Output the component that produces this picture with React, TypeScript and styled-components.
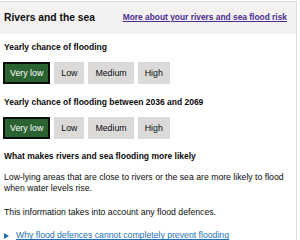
import React from "react";
import styled, { createGlobalStyle } from "styled-components";

const Global = createGlobalStyle`
  html, body { margin: 0; padding: 0; background: #ffffff; }
  body { font-family: "Liberation Sans", Arial, sans-serif; color: #0b0c0c; }
  * { box-sizing: border-box; }
`;

const Panel = styled.div`
  width: 297px;
  margin-top: 1px;
  border-top: 1px solid #dddddd;
  border-right: 1px solid #dddddd;
  height: 239px;
  overflow: hidden;
`;

const Header = styled.div`
  display: flex;
  align-items: center;
  justify-content: space-between;
  height: 32px;
  padding: 0 9px 1px 4px;
  background: #f3f2f1;
`;

const Title = styled.h2`
  margin: 0;
  font-size: 10.3px;
  font-weight: 700;
  line-height: 12px;
`;

const HeaderLink = styled.a`
  font-size: 8.4px;
  font-weight: 700;
  line-height: 11px;
  color: #4c2c92;
  text-decoration: underline;
  text-underline-offset: 1px;
`;

const Content = styled.div`
  padding: 8px 4px 0 4px;
`;

const SubHeading = styled.h3<{ $mb?: number }>`
  margin: 0 0 ${(p) => p.$mb ?? 9}px 0;
  font-size: 8.5px;
  font-weight: 700;
  line-height: 11px;
`;

const ButtonRow = styled.div<{ $mb: number }>`
  display: flex;
  gap: 4px;
  margin: 0 0 ${(p) => p.$mb}px -1px;
`;

const RiskButton = styled.div<{ $active?: boolean }>`
  display: flex;
  align-items: center;
  height: 22px;
  padding: 0 5px;
  font-size: 8.8px;
  line-height: 11px;
  background: ${(p) => (p.$active ? "#2a6331" : "#dbdad9")};
  color: ${(p) => (p.$active ? "#ffffff" : "#0b0c0c")};
  border: 2px solid ${(p) => (p.$active ? "#0b0c0c" : "#dbdad9")};
`;

const Para = styled.p`
  margin: 0 0 13px 0;
  font-size: 8.7px;
  line-height: 10.8px;
`;

const Summary = styled.div`
  display: flex;
  align-items: center;
  gap: 7px;
  font-size: 8.7px;
  line-height: 11px;
  color: #1d70b8;
`;

const Arrow = styled.span`
  width: 0;
  height: 0;
  border-top: 3.5px solid transparent;
  border-bottom: 3.5px solid transparent;
  border-left: 5px solid #1d70b8;
`;

const SummaryText = styled.span`
  text-decoration: underline;
  text-underline-offset: 1px;
`;

const levels = ["Very low", "Low", "Medium", "High"];

function Levels({ mb }: { mb: number }) {
  return (
    <ButtonRow $mb={mb}>
      {levels.map((l, i) => (
        <RiskButton key={l} $active={i === 0}>
          {l}
        </RiskButton>
      ))}
    </ButtonRow>
  );
}

export default function App() {
  return (
    <>
      <Global />
      <Panel>
        <Header>
          <Title>Rivers and the sea</Title>
          <HeaderLink href="#">More about your rivers and sea flood risk</HeaderLink>
        </Header>
        <Content>
          <SubHeading>Yearly chance of flooding</SubHeading>
          <Levels mb={13} />
          <SubHeading>Yearly chance of flooding between 2036 and 2069</SubHeading>
          <Levels mb={12} />
          <SubHeading $mb={10}>What makes rivers and sea flooding more likely</SubHeading>
          <Para>
            Low-lying areas that are close to rivers or the sea are more likely to flood
            when water levels rise.
          </Para>
          <Para>This information takes into account any flood defences.</Para>
          <Summary>
            <Arrow />
            <SummaryText>Why flood defences cannot completely prevent flooding</SummaryText>
          </Summary>
        </Content>
      </Panel>
    </>
  );
}
